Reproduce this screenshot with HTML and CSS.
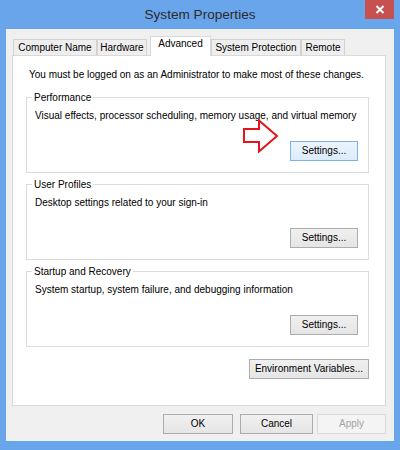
FILE: index.html
```html
<!DOCTYPE html>
<html>
<head>
<meta charset="utf-8">
<title>System Properties</title>
<link rel="stylesheet" href="styles.css">
</head>
<body>
<div class="window">
  <div class="titlebar">
    <span class="title">System Properties</span>
    <button class="close" aria-label="Close">
      <svg width="10" height="9" viewBox="0 0 10 9"><path d="M1.5 1 L8.5 8 M8.5 1 L1.5 8" stroke="#fff" stroke-width="2" fill="none"/></svg>
    </button>
  </div>
  <div class="client">
    <div class="tabs">
      <div class="tab tab-cn">Computer Name</div>
      <div class="tab tab-hw">Hardware</div>
      <div class="tab tab-adv selected">Advanced</div>
      <div class="tab tab-sp">System Protection</div>
      <div class="tab tab-rm">Remote</div>
    </div>
    <div class="panel">
      <p class="note">You must be logged on as an Administrator to make most of these changes.</p>
      <fieldset class="group">
        <legend>Performance</legend>
        <p class="desc">Visual effects, processor scheduling, memory usage, and virtual memory</p>
        <div class="btnrow">
          <svg class="arrow" width="36" height="34" viewBox="0 0 36 34"><path d="M1 10 H16 V1.5 L34 17 L16 32.5 V23 H1 Z" fill="none" stroke="#e3141c" stroke-width="2" stroke-linejoin="miter"/></svg>
          <button class="btn settings hot">Settings...</button>
        </div>
      </fieldset>
      <fieldset class="group">
        <legend>User Profiles</legend>
        <p class="desc">Desktop settings related to your sign-in</p>
        <div class="btnrow">
          <button class="btn settings">Settings...</button>
        </div>
      </fieldset>
      <fieldset class="group">
        <legend>Startup and Recovery</legend>
        <p class="desc">System startup, system failure, and debugging information</p>
        <div class="btnrow">
          <button class="btn settings">Settings...</button>
        </div>
      </fieldset>
      <div class="envrow">
        <button class="btn env">Environment Variables...</button>
      </div>
    </div>
    <div class="footer">
      <button class="btn ok">OK</button>
      <button class="btn cancel">Cancel</button>
      <button class="btn apply" disabled>Apply</button>
    </div>
  </div>
</div>
</body>
</html>
```

FILE: styles.css
```css
* { box-sizing: border-box; }

body {
  margin: 0;
  font-family: "Liberation Sans", Arial, sans-serif;
  font-size: 10px;
  color: #000;
}

.window {
  width: 400px;
  height: 450px;
  background: #69a5eb;
  display: flex;
  flex-direction: column;
}

.titlebar {
  height: 29px;
  flex: none;
  display: grid;
  grid-template-columns: 1fr auto 1fr;
}

.title {
  grid-column: 2;
  font-size: 13.6px;
  line-height: 29px;
  color: #2b2b2b;
}

.close {
  grid-column: 3;
  justify-self: end;
  align-self: start;
  width: 29px;
  height: 19px;
  margin-right: 6px;
  padding: 0;
  border: 0;
  background: #c75050;
  display: flex;
  align-items: center;
  justify-content: center;
}

.client {
  flex: 1;
  margin: 0 6px 9px;
  background: #f0f0f0;
  padding: 7px 8px 7px 6px;
  display: flex;
  flex-direction: column;
}

.tabs {
  height: 20px;
  flex: none;
  display: flex;
  align-items: flex-end;
  padding-left: 1px;
  margin-bottom: -1px;
  position: relative;
  z-index: 1;
}

.tab {
  height: 17px;
  border: 1px solid #d2d2d2;
  border-bottom-color: #d9d9d9;
  background: #eeeeee;
  text-align: center;
  line-height: 15px;
  white-space: nowrap;
}

.tab-cn { width: 84px; }
.tab-hw { width: 50px; }
.tab-adv { width: 61px; margin-left: 3px; }
.tab-sp { width: 90px; }
.tab-rm { width: 44px; }

.tab.selected {
  height: 20px;
  background: #fff;
  border-color: #d9d9d9;
  border-bottom: 0;
  line-height: 14px;
}

.panel {
  flex: 1;
  background: #fff;
  border: 1px solid #d9d9d9;
  padding: 12px 16px 0 13px;
  display: flex;
  flex-direction: column;
}

.note {
  margin: 0 0 0 3px;
  line-height: 13px;
}

.group {
  margin: 5px 0 0;
  padding: 5px 10px 11px 8px;
  border: 1px solid #dcdcdc;
  min-width: 0;
}

.note + .group { margin-top: 10px; }

.group legend {
  margin-left: -3px;
  padding: 0 2px;
  line-height: 13px;
}

.desc {
  margin: 0;
  line-height: 13px;
  white-space: nowrap;
}

.btnrow {
  margin-top: 19px;
  display: flex;
  justify-content: flex-end;
  position: relative;
}

.arrow {
  position: absolute;
  left: 208px;
  top: -22px;
}

.btn {
  height: 20px;
  padding: 0;
  border: 1px solid #acacac;
  background: linear-gradient(#f0f0f0, #e5e5e5);
  font-family: inherit;
  font-size: 10px;
  line-height: 18px;
  color: #000;
  text-align: center;
}

.settings { width: 68px; }

.btn.hot {
  border-color: #7eb4ea;
  background: linear-gradient(#ecf4fc, #dcecfc);
}

.envrow {
  margin-top: 12px;
  display: flex;
  justify-content: flex-end;
}

.env { width: 120px; }

.footer {
  margin-top: 8px;
  flex: none;
  display: flex;
  justify-content: flex-end;
}

.ok { width: 70px; }
.cancel { width: 73px; margin-left: 7px; }
.apply { width: 69px; margin-left: 4px; }

.btn.apply {
  border-color: #d9d9d9;
  background: #f4f4f4;
  color: #a3a3a3;
}
```
